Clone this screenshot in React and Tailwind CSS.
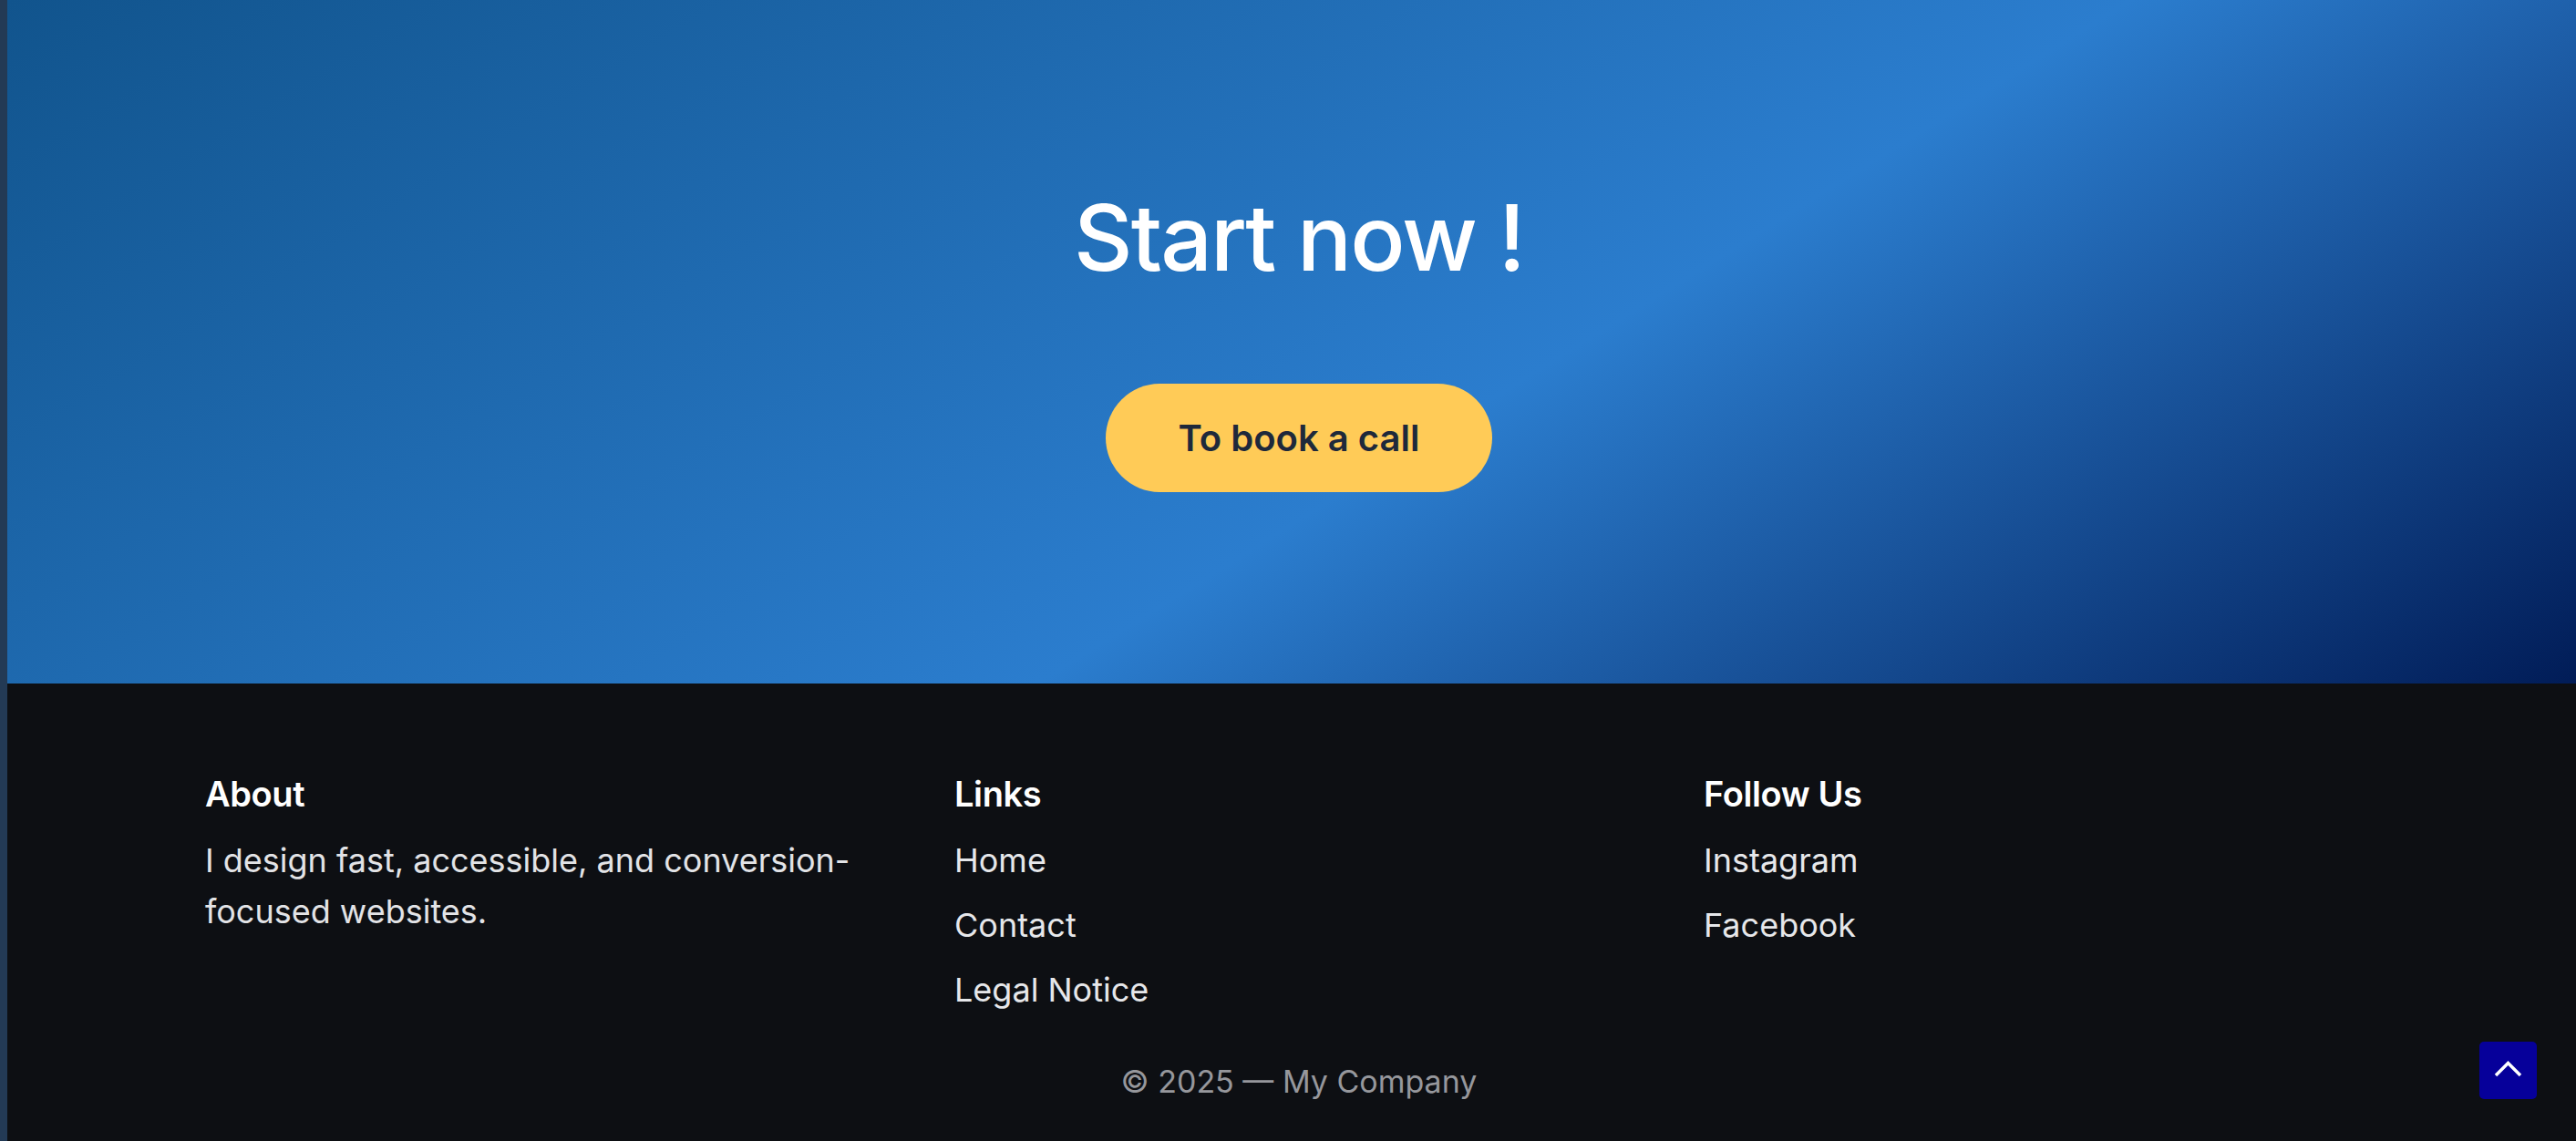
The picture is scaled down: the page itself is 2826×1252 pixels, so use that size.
import React from "react";

const Column = ({ title, children }) => (
    <div>
        <h3 className="text-[38px] leading-[48px] font-semibold text-white tracking-[-0.01em]">{title}</h3>
        <div className="mt-[21px]">{children}</div>
    </div>
)

const LinkList = ({ items }) => (
    <ul className="flex flex-col gap-[15px]">
        {items.map((item) => (
            <li key={item}>
                <a href="#" className="text-[36px] leading-[56px] text-[#e6e7ea]">{item}</a>
            </li>
        ))}
    </ul>
)

const App = () => {
    return (
        <div className="flex min-h-screen bg-[#0d0f13] font-['Inter',sans-serif]">
            <div className="w-[8px] shrink-0 bg-[#233a55]"></div>
            <div className="flex-1 min-w-0">
                <section className="h-[750px] flex flex-col items-center pt-[201px] pl-[16px] bg-[linear-gradient(148deg,#11548d_0%,#2b7dce_58%,#011c57_100%)]">
                    <h2 className="text-[100px] leading-[120px] font-medium text-white tracking-[-0.02em]">Start now !</h2>
                    <a href="#" className="mt-[100px] h-[119px] px-[80px] rounded-full bg-[#ffcb57] text-[#1e293b] text-[40px] font-semibold flex items-center">
                        To book a call
                    </a>
                </section>

                <footer className="pt-[97px] pb-[36px]">
                    <div className="mx-auto w-[2384px] grid grid-cols-3 gap-[82px]">
                        <Column title="About">
                            <p className="text-[36px] leading-[56px] text-[#e2e3e6]">
                                I design fast, accessible, and conversion-focused websites.
                            </p>
                        </Column>
                        <Column title="Links">
                            <LinkList items={["Home", "Contact", "Legal Notice"]} />
                        </Column>
                        <Column title="Follow Us">
                            <LinkList items={["Instagram", "Facebook"]} />
                        </Column>
                    </div>
                    <p className="mt-[45px] pl-[16px] text-center text-[34px] leading-[56px] text-[#96979c]">© 2025 — My Company</p>
                </footer>
            </div>

            <button className="fixed right-[43px] bottom-[46px] w-[63px] h-[63px] rounded-[5px] bg-[#06009a] flex items-center justify-center">
                <svg width="63" height="63" viewBox="0 0 63 63" fill="none">
                    <polyline points="18,37 31.5,23.5 45,37" stroke="white" strokeWidth="3.5" />
                </svg>
            </button>
        </div>
    )
}

export default App
